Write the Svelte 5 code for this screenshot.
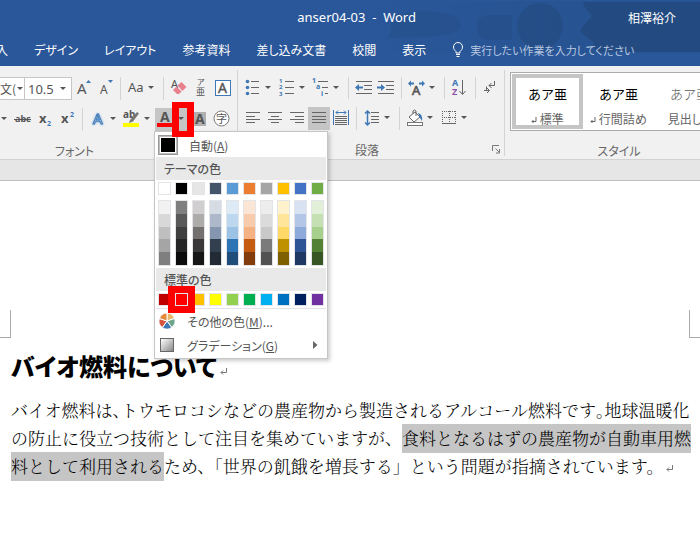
<script lang="ts">
  const tabs = ["挿入", "デザイン", "レイアウト", "参考資料", "差し込み文書", "校閲", "表示"];

  const themeColors = [
    { base: "#ffffff", tints: ["#f2f2f2", "#d8d8d8", "#bfbfbf", "#a5a5a5", "#7f7f7f"] },
    { base: "#000000", tints: ["#7f7f7f", "#595959", "#3f3f3f", "#262626", "#0c0c0c"] },
    { base: "#e7e6e6", tints: ["#d0cece", "#aeabab", "#757070", "#3a3838", "#171616"] },
    { base: "#44546a", tints: ["#d6dce4", "#adb9ca", "#8496b0", "#323f4f", "#222a35"] },
    { base: "#5b9bd5", tints: ["#deebf6", "#bdd7ee", "#9cc3e5", "#2e75b5", "#1e4e79"] },
    { base: "#ed7d31", tints: ["#fbe5d5", "#f7cbac", "#f4b183", "#c55a11", "#833c0b"] },
    { base: "#a5a5a5", tints: ["#ededed", "#dbdbdb", "#c9c9c9", "#7b7b7b", "#525252"] },
    { base: "#ffc000", tints: ["#fff2cc", "#fee599", "#ffd965", "#bf9000", "#7f6000"] },
    { base: "#4472c4", tints: ["#d9e2f3", "#b4c6e7", "#8eaadb", "#2f5496", "#1f3864"] },
    { base: "#70ad47", tints: ["#e2efd9", "#c5e0b3", "#a8d08d", "#538135", "#375623"] },
  ];

  const standardColors = [
    "#c00000", "#ff0000", "#ffc000", "#ffff00", "#92d050",
    "#00b050", "#00b0f0", "#0070c0", "#002060", "#7030a0",
  ];

  const styles = [
    { name: "標準", mark: true, heading: false },
    { name: "行間詰め", mark: true, heading: false },
    { name: "見出し 1", mark: false, heading: true },
  ];

  let fontColor = $state("#ff0000");
  let fontSize = $state("10.5");
  let menuOpen = $state(true);
  let align = $state("justify");
  let currentStyle = $state("標準");

  function pick(color: string) {
    fontColor = color;
  }
</script>

{#snippet caret()}
  <svg class="caret" viewBox="0 0 12 22" aria-hidden="true"><path d="M1 9h6l-3 3z" fill="#555" /></svg>
{/snippet}

{#snippet pilcrow()}
  <svg class="pilcrow" width="8" height="8" viewBox="0 0 8 8" fill="none" stroke="#777" aria-hidden="true"><path d="M6.500 0v4.500H1M3 2.500l-2 2 2 2" /></svg>
{/snippet}

<div class="word">
  <header class="top">
    <svg class="pattern" viewBox="0 0 350 54" aria-hidden="true">
      <defs>
        <linearGradient id="shade">
          <stop offset="0" stop-color="#26528f" stop-opacity="0" />
          <stop offset=".6" stop-color="#26528f" stop-opacity=".7" />
        </linearGradient>
      </defs>
      <rect y="1" width="350" height="52" fill="url(#shade)" />
      <g fill="#234b82">
        <path d="M233 2h117v50H246l-3-10-9-7q-6-4-1-9l9-10-8-10z" />
        <circle cx="190" cy="26" r="23" opacity=".7" />
        <path d="M127 27q0-12 13-12h22v25h-22q-13 0-13-13z" opacity=".5" />
        <path d="M38 38q4-8 3-14c0-6 10-13 30-13 30 0 40 8 40 14 0 8-18 12-40 12z" opacity=".35" />
      </g>
    </svg>
    <div class="title">
      <span class="title__doc">anser04-03&nbsp; -&nbsp; Word</span>
      <span class="title__user">相澤裕介</span>
    </div>
    <nav class="tabs">
      {#each tabs as tab (tab)}
        <button class="tab">{tab}</button>
      {/each}
      <button class="tell">
        <svg width="12" height="16" viewBox="0 0 12 16" fill="none" stroke="#fff" aria-hidden="true">
          <path d="M4 11V9.500C2.500 8 1.500 7 1.500 5a4.500 4.500 0 0 1 9 0c0 2-1 3-2.500 4.500V11z" />
          <path d="M4 12.500h4M4.500 14.500h3" />
        </svg>
        実行したい作業を入力してください
      </button>
    </nav>
  </header>

  <div class="ribbon">
    <section class="group group--font">
      <div class="row">
        <button class="combo combo--font" aria-label="フォント名"><span>文(</span>{@render caret()}</button>
        <label class="combo combo--size">
          <input aria-label="フォント サイズ" bind:value={fontSize} />
          {@render caret()}
        </label>
        <button class="tool" aria-label="フォント サイズの拡大">
          <svg viewBox="0 0 22 22"><text x="5" y="17" font-size="15">A</text><path d="M14 6h5l-2.500-3z" fill="#3f78b5" /></svg>
        </button>
        <button class="tool" aria-label="フォント サイズの縮小">
          <svg viewBox="0 0 22 22"><text x="6" y="17" font-size="12">A</text><path d="M14 3h5l-2.500 3z" fill="#3f78b5" /></svg>
        </button>
        <i class="sep"></i>
        <button class="tool tool--split" aria-label="文字種の変換">
          <svg viewBox="0 0 22 22"><text x="3" y="15" font-size="13">Aa</text></svg>
          {@render caret()}
        </button>
        <i class="sep"></i>
        <button class="tool" aria-label="書式のクリア">
          <svg viewBox="0 0 22 22">
            <text x="3" y="11" font-size="11">A</text>
            <path d="M5 13l3.500-3.500 5 5L11 17H9z" fill="#e8808e" />
            <path d="M9.500 8.500l4-3.500 5 5-4 4z" fill="#e8808e" />
          </svg>
        </button>
        <button class="tool" aria-label="ルビ">
          <svg viewBox="0 0 22 22">
            <text x="7" y="8" font-size="8">ア</text>
            <text x="6" y="18" font-size="9">亜</text>
          </svg>
        </button>
        <button class="tool" aria-label="囲み線">
          <svg viewBox="0 0 22 22">
            <rect x="3.500" y="3.500" width="15" height="15" fill="#fff" stroke="#3f78b5" />
            <text x="6" y="16" font-size="14" stroke="#555" stroke-width=".4">A</text>
          </svg>
        </button>
      </div>

      <div class="row">
        <button class="drop" aria-label="下線の種類">{@render caret()}</button>
        <button class="tool" aria-label="取り消し線">
          <svg viewBox="0 0 22 22"><text x="3" y="14" font-size="9" font-weight="bold">abc</text><path d="M2 11.500h17" stroke="#555" /></svg>
        </button>
        <button class="tool" aria-label="下付き">
          <svg viewBox="0 0 22 22">
            <text x="5" y="15" font-size="13" font-weight="bold">x</text>
            <text x="13" y="18" font-size="7" font-weight="bold" class="blue">2</text>
          </svg>
        </button>
        <button class="tool" aria-label="上付き">
          <svg viewBox="0 0 22 22">
            <text x="5" y="15" font-size="13" font-weight="bold">x</text>
            <text x="14" y="9" font-size="7" font-weight="bold" class="blue">2</text>
          </svg>
        </button>
        <i class="sep"></i>
        <button class="tool tool--split" aria-label="文字の効果と体裁">
          <svg viewBox="0 0 22 22">
            <text x="6" y="16" font-size="15" class="outline">A</text>
          </svg>
          {@render caret()}
        </button>
        <button class="tool tool--split" aria-label="蛍光ペンの色">
          <svg viewBox="0 0 22 22">
            <text x="2" y="10" font-size="10" font-weight="bold">ab</text>
            <path d="M9 12l7-8 2 1.500-6 8-4 1.500z" fill="#777" />
            <rect x="2" y="15" width="16" height="4" fill="#ff0" />
          </svg>
          {@render caret()}
        </button>
        <div class="anchor">
          <button
            class="tool tool--split tool--on"
            aria-label="フォントの色"
            aria-expanded={menuOpen}
            onclick={() => (menuOpen = !menuOpen)}
          >
            <svg viewBox="0 0 22 22">
              <text x="5" y="14" font-size="14" font-weight="bold">A</text>
              <rect x="2" y="15" width="16" height="4" fill={fontColor} />
            </svg>
            {@render caret()}
          </button>
          <span class="mark mark--caret"></span>

          {#if menuOpen}
            <div class="menu">
              <button class="auto" onclick={() => pick("#000000")}>
                <span class="auto__chip"></span>
                <span>自動(<u>A</u>)</span>
              </button>
              <h3 class="menu__head">テーマの色</h3>
              <div class="swatches">
                {#each themeColors as color (color.base)}
                  <button class="swatch" aria-label={color.base} style:background={color.base} onclick={() => pick(color.base)}></button>
                {/each}
              </div>
              <div class="swatches swatches--tints">
                {#each themeColors as color (color.base)}
                  <div class="tints">
                    {#each color.tints as tint (tint)}
                      <button class="tint" aria-label={tint} style:background={tint} onclick={() => pick(tint)}></button>
                    {/each}
                  </div>
                {/each}
              </div>
              <h3 class="menu__head">標準の色</h3>
              <div class="swatches">
                {#each standardColors as color (color)}
                  <div class="anchor">
                    <button class="swatch" aria-label={color} style:background={color} onclick={() => pick(color)}></button>
                    {#if color === "#ff0000"}<span class="mark mark--swatch"></span>{/if}
                  </div>
                {/each}
              </div>
              <div class="menu__more">
                <button class="item">
                  <svg width="16" height="16" viewBox="0 0 16 16" stroke="#fff" aria-hidden="true">
                    <path d="M8 8V0a8 8 0 0 1 7.600 5.500z" fill="#e8b96b" />
                    <path d="M8 8l7.600-2.500a8 8 0 0 1-2.900 9z" fill="#6fa58c" />
                    <path d="M8 8l4.700 6.500a8 8 0 0 1-9.400 0z" fill="#3c78b4" />
                    <path d="M8 8l-4.700 6.500a8 8 0 0 1-2.900-9z" fill="#d5553c" />
                    <path d="M8 8L.4 5.500A8 8 0 0 1 8 0z" fill="#e58b3c" />
                  </svg>
                  <span>その他の色(<u>M</u>)...</span>
                </button>
                <button class="item">
                  <span class="item__gradient"></span>
                  <span>グラデーション(<u>G</u>)</span>
                  <svg class="item__arrow" width="5" height="8" viewBox="0 0 5 8" aria-hidden="true"><path d="M0 0l4.500 4L0 8z" fill="#666" /></svg>
                </button>
              </div>
            </div>
          {/if}
        </div>
        <button class="tool" aria-label="文字の網かけ">
          <svg viewBox="0 0 22 22">
            <rect x="4" y="4" width="13" height="14" fill="#b0b0b0" />
            <text x="6" y="16" font-size="14" font-weight="bold">A</text>
          </svg>
        </button>
        <button class="tool" aria-label="囲い文字">
          <svg viewBox="0 0 22 22">
            <circle cx="10.500" cy="10.500" r="7.500" fill="#fff" stroke="#777" />
            <text x="5" y="15" font-size="11">字</text>
          </svg>
        </button>
      </div>
      <div class="caption caption--font">フォント</div>
    </section>

    <section class="group group--para">
      <div class="row">
        <button class="tool tool--split" aria-label="箇条書き">
          <svg viewBox="0 0 22 22">
            <g class="dot"><circle cx="5.500" cy="4.500" r="1.800" /><circle cx="5.500" cy="10.500" r="1.800" /><circle cx="5.500" cy="16.500" r="1.800" /></g>
            <path class="line" d="M9 4.500h8M9 10.500h8M9 16.500h8" />
          </svg>
          {@render caret()}
        </button>
        <button class="tool tool--split" aria-label="段落番号">
          <svg viewBox="0 0 22 22">
            <g class="blue" font-size="6" font-weight="bold"><text x="3" y="6">1</text><text x="3" y="12">2</text><text x="3" y="19">3</text></g>
            <path class="line" d="M9 4.500h9M9 10.500h9M9 16.500h9" />
          </svg>
          {@render caret()}
        </button>
        <button class="tool tool--split" aria-label="アウトライン">
          <svg viewBox="0 0 22 22">
            <g class="blue" font-size="7" font-weight="bold"><text x="2" y="6">1</text><text x="6" y="12">a</text><text x="11" y="19">i</text></g>
            <path class="line" d="M8 4.500h10M12 10.500h6M15 16.500h3" />
          </svg>
          {@render caret()}
        </button>
        <i class="sep"></i>
        <button class="tool" aria-label="インデントを減らす">
          <svg viewBox="0 0 22 22"><path class="line" d="M3 4.500h16M11 8.500h8M11 12.500h8M3 16.500h16" /><path d="M2 10.500l4-3.500v2.500h4v2H6V14z" fill="#3f78b5" /></svg>
        </button>
        <button class="tool" aria-label="インデントを増やす">
          <svg viewBox="0 0 22 22"><path class="line" d="M3 4.500h16M11 8.500h8M11 12.500h8M3 16.500h16" /><path d="M10 10.500L6 7v2.500H2v2h4V14z" fill="#3f78b5" /></svg>
        </button>
        <i class="sep"></i>
        <button class="tool tool--split" aria-label="拡張書式">
          <svg viewBox="0 0 22 22">
            <text x="6" y="18" font-size="13" stroke="#555" stroke-width=".6">A</text>
            <path d="M2 6.500L5 3.500v2h3v2H5v2zM19 6.500l-3-3v2h-3v2h3v2z" fill="#3f78b5" />
          </svg>
          {@render caret()}
        </button>
        <i class="sep"></i>
        <button class="tool" aria-label="並べ替え">
          <svg viewBox="0 0 22 22">
            <text x="3" y="9" font-size="9" font-weight="bold" class="blue">A</text>
            <text x="3" y="18" font-size="9" font-weight="bold" class="purple">Z</text>
            <path class="line" d="M13.500 3v14M10.500 14l3 3.500 3-3.500" />
          </svg>
        </button>
        <i class="sep"></i>
        <button class="tool" aria-label="編集記号の表示">
          <svg viewBox="0 0 22 22"><path d="M14.500 4v4.500H9M11.500 6L9 8.500l2.500 2.500M6.500 9.500v4M4 13.500h5M7 11l2.500 2.500L7 16" class="line" /></svg>
        </button>
      </div>

      <div class="row">
        <button class="tool" class:tool--on={align === "left"} aria-label="左揃え" onclick={() => (align = "left")}>
          <svg viewBox="0 0 22 22"><path class="line" d="M4 5.500h14M4 9.500h9M4 12.500h14M4 15.500h9" /></svg>
        </button>
        <button class="tool" class:tool--on={align === "center"} aria-label="中央揃え" onclick={() => (align = "center")}>
          <svg viewBox="0 0 22 22"><path class="line" d="M4 5.500h14M7 9.500h8M4 12.500h14M7 15.500h8" /></svg>
        </button>
        <button class="tool" class:tool--on={align === "right"} aria-label="右揃え" onclick={() => (align = "right")}>
          <svg viewBox="0 0 22 22"><path class="line" d="M4 5.500h14M9 9.500h9M4 12.500h14M9 15.500h9" /></svg>
        </button>
        <button class="tool" class:tool--on={align === "justify"} aria-label="両端揃え" onclick={() => (align = "justify")}>
          <svg viewBox="0 0 22 22"><path class="line" d="M4 5.500h14M4 9.500h14M4 12.500h14M4 15.500h14" /></svg>
        </button>
        <button class="tool" class:tool--on={align === "spread"} aria-label="均等割り付け" onclick={() => (align = "spread")}>
          <svg viewBox="0 0 22 22">
            <path class="line" d="M5 9.500h12M5 11.500h12M5 13.500h12M5 15.500h12M5 17.500h12" />
            <path d="M3.500 3v15M18.500 3v15M6 5.500h10M8 3.500L6 5.500l2 2M14 3.500l2 2-2 2" fill="none" stroke="#3f78b5" />
          </svg>
        </button>
        <i class="sep"></i>
        <button class="tool tool--split" aria-label="行と段落の間隔">
          <svg viewBox="0 0 22 22">
            <path class="line" d="M10 5.500h8M10 9.500h8M10 12.500h8M10 15.500h8" />
            <path d="M6.500 4v14M4 6.500L6.500 4 9 6.500M4 15.500L6.500 18 9 15.500" fill="none" stroke="#3f78b5" stroke-width="1.500" />
          </svg>
          {@render caret()}
        </button>
        <i class="sep"></i>
        <button class="tool tool--split" aria-label="塗りつぶし">
          <svg viewBox="0 0 22 22">
            <path d="M5 10l6-5 5 5-6 5z" fill="#fff" stroke="#666" />
            <path d="M9 7V4q1.500-2 3 0v5" fill="none" stroke="#666" />
            <path d="M14 6q5 1 4 8l-2-3z" fill="#3f78b5" />
            <rect x="3.500" y="15.500" width="15" height="3" fill="#fff" stroke="#777" />
          </svg>
          {@render caret()}
        </button>
        <button class="tool tool--split" aria-label="罫線">
          <svg viewBox="0 0 22 22">
            <path d="M4 4.500h14M4 10.500h14M4.500 4v13M11.500 4v13M17.500 4v13" fill="none" stroke="#666" stroke-dasharray="1 1" />
            <path class="line" d="M4 16.500h14" />
          </svg>
          {@render caret()}
        </button>
      </div>
      <div class="caption">
        <span>段落</span>
        <button class="launcher" aria-label="段落の設定">
          <svg width="9" height="9" viewBox="0 0 9 9" fill="none" stroke="#777"><path d="M.5 6V.5H7M3.500 3.500l4 4M7.500 4v4H4" /></svg>
        </button>
      </div>
    </section>

    <section class="group group--styles">
      <div class="gallery">
        {#each styles as style (style.name)}
          <button class="style" class:style--on={style.name === currentStyle} onclick={() => (currentStyle = style.name)}>
            <span class="style__sample" class:style__sample--heading={style.heading}>あア亜</span>
            <span class="style__name">
              {#if style.mark}<svg width="6" height="7" viewBox="0 0 6 7" fill="none" stroke="#666"><path d="M5 0v4.500H1M2.500 3L1 4.500 2.500 6" /></svg>{/if}
              {style.name}
            </span>
          </button>
        {/each}
      </div>
      <div class="caption caption--styles">スタイル</div>
    </section>
  </div>

  <main class="page">
    <div class="corners"><i class="corner corner--left"></i><i class="corner corner--right"></i></div>
    <h1>バイオ燃料について{@render pilcrow()}</h1>
    <p>
      バイオ燃料は<span class="half">、</span>トウモロコシなどの農産物から製造されるアルコール燃料です<span class="half">。</span>地球温暖化<br />の防止に役立つ技術として注目を集めていますが、<mark>食料となるはずの農産物が自動車用燃<br />料として利用される</mark>ため、「世界の飢餓を増長する」という問題が指摘されています。{@render pilcrow()}
    </p>
  </main>
</div>

<style>
  :global(body) {
    margin: 0;
    background: #fff;
  }

  .word {
    font-family: "Noto Sans CJK JP", sans-serif;
    font-size: 12px;
    font-feature-settings: "palt";
    color: #555;
    overflow: hidden;
  }

  button {
    margin: 0;
    padding: 0;
    border: 0;
    background: none;
    font: inherit;
    font-feature-settings: inherit;
    color: inherit;
    white-space: nowrap;
    cursor: pointer;
  }

  .top {
    position: relative;
    height: 66px;
    background: #2a579a;
    color: #fff;
  }

  .pattern {
    position: absolute;
    top: 0;
    right: 0;
    width: 350px;
    height: 54px;
  }

  .title {
    position: relative;
    display: flex;
    height: 34px;
    align-items: center;
    justify-content: flex-end;
    gap: 212px;
    padding-right: 24px;
    white-space: nowrap;
  }

  .title__doc {
    font-family: "Noto Sans", sans-serif;
    font-size: 13px;
  }

  .tabs {
    position: relative;
    display: flex;
    height: 32px;
    align-items: center;
    gap: 26px;
    margin-left: -16px;
    padding-bottom: 1px;
    box-sizing: border-box;
  }

  .tell {
    display: flex;
    align-items: center;
    gap: 6px;
    font-size: 11px;
    color: #b8c8e0;
  }

  .ribbon {
    display: flex;
    height: 93px;
    background: #f1f1f1;
    border-bottom: 1px solid #d2d2d2;
  }

  .group {
    display: flex;
    flex-direction: column;
    gap: 8px;
    flex: none;
    box-sizing: border-box;
  }

  .group--font,
  .group--para {
    border-right: 1px solid #d4d4d4;
    margin: 4px 0 3px;
    padding-top: 7px;
  }

  .group--font {
    width: 238px;
  }

  .group--para {
    width: 267px;
    padding-left: 4px;
  }

  .group--styles {
    flex: 1;
    min-width: 0;
    padding: 6px 0 0 5px;
    overflow: hidden;
  }

  .row {
    display: flex;
    height: 23px;
    align-items: stretch;
  }

  .combo {
    display: flex;
    box-sizing: border-box;
    align-items: center;
    justify-content: space-between;
    border: 1px solid #c6c6c6;
    background: #fff;
  }

  .combo--font {
    width: 25px;
    border-left: 0;
    overflow: hidden;
  }

  .combo--size {
    width: 47px;
    border-left: 0;
  }

  .combo input {
    width: 32px;
    min-width: 0;
    border: 0;
    padding: 0 0 0 3px;
    outline: none;
    font: 13px "Noto Sans", sans-serif;
    color: #555;
    background: none;
  }

  .caret {
    flex: none;
    width: 12px;
    height: 22px;
  }

  .tool {
    display: flex;
    align-items: flex-start;
    width: 22px;
  }

  .tool--split {
    width: 34px;
  }

  .tool svg:first-child {
    flex: none;
    width: 22px;
    height: 22px;
  }

  .tool--on {
    height: 23px;
    background: #c5c5c5;
  }

  .tool text {
    font-family: "Noto Sans", "Noto Sans CJK JP", sans-serif;
    fill: #555;
  }

  .tool .blue,
  .tool .blue text {
    fill: #3f78b5;
  }

  .tool .purple {
    fill: #8b4fa8;
  }

  .tool .outline {
    fill: #fff;
    stroke: #3f78b5;
    stroke-width: 1;
    filter: drop-shadow(0 0 1px #6ba3dc);
  }

  .dot {
    fill: #3f78b5;
  }

  .line {
    fill: none;
    stroke: #666;
  }

  .drop {
    display: flex;
    width: 12px;
  }

  .sep {
    flex: none;
    width: 1px;
    margin: 0 4px;
    background: #d4d4d4;
  }

  .caption {
    display: flex;
    align-items: center;
    justify-content: center;
    height: 18px;
    margin-top: 3px;
    color: #666;
  }

  .caption span {
    flex: 1;
    text-align: center;
  }

  .caption--font {
    padding-right: 88px;
  }

  .caption--styles {
    padding-left: 28px;
  }

  .launcher {
    display: flex;
    width: 12px;
  }

  .gallery {
    display: flex;
    height: 61px;
    box-sizing: border-box;
    border: 1px solid #ababab;
    border-right: 0;
    background: #fff;
    padding: 1px;
    overflow: hidden;
  }

  .style {
    display: flex;
    flex: none;
    flex-direction: column;
    align-items: center;
    gap: 8px;
    box-sizing: border-box;
    width: 71px;
    padding-top: 7px;
    border: 4px solid transparent;
    line-height: 17px;
  }

  .style--on {
    border-color: #c5c5c5;
  }

  .style__sample {
    font-size: 13px;
    font-feature-settings: normal;
    color: #000;
  }

  .style__sample--heading {
    font-weight: 300;
    color: #555;
  }

  .style__name {
    color: #666;
  }

  .anchor {
    position: relative;
  }

  .mark {
    position: absolute;
    z-index: 3;
    box-sizing: border-box;
    border: 7px solid #f00;
    pointer-events: none;
  }

  .mark--caret {
    left: 17px;
    top: -6px;
    width: 22px;
    height: 35px;
    border-width: 6px 7px;
  }

  .mark--swatch {
    left: -7px;
    top: -7px;
    width: 27px;
    height: 27px;
  }

  .menu {
    position: absolute;
    z-index: 2;
    top: 23px;
    left: -1px;
    box-sizing: border-box;
    width: 174px;
    padding: 1px;
    border: 1px solid #c6c6c6;
    background: #fff;
    box-shadow: 2px 2px 4px rgba(0, 0, 0, 0.2);
  }

  .auto {
    display: flex;
    align-items: center;
    gap: 11px;
    width: 100%;
    height: 24px;
    padding-left: 2px;
  }

  .auto__chip {
    box-sizing: border-box;
    width: 20px;
    height: 20px;
    border: 1px solid #999;
    background: #000;
    box-shadow: inset 0 0 0 1px #bbb, inset 0 0 0 2px #fff;
  }

  .menu__head {
    margin: 0;
    padding-left: 8px;
    background: #e9e9e9;
    font-size: 12px;
    font-weight: 500;
    line-height: 23px;
  }

  .swatches {
    display: flex;
    justify-content: space-between;
    padding: 2px;
  }

  .swatches--tints {
    padding-top: 3px;
  }

  .swatch {
    display: block;
    box-sizing: border-box;
    width: 13px;
    height: 13px;
    border: 1px solid #e2e4e7;
  }

  .tints {
    display: flex;
    flex-direction: column;
    box-sizing: border-box;
    width: 13px;
    height: 66px;
    border: 1px solid #e2e4e7;
  }

  .tint {
    flex: 1;
  }

  .menu__more {
    border-top: 1px solid #e2e4e7;
  }

  .item {
    display: flex;
    align-items: center;
    gap: 12px;
    width: 100%;
    height: 24px;
    padding: 0 8px 0 3px;
  }

  .item__gradient {
    box-sizing: border-box;
    width: 14px;
    height: 14px;
    margin: 0 1px;
    border: 1px solid #666;
    background: linear-gradient(135deg, #fff, #888);
  }

  .item__arrow {
    margin-left: auto;
  }

  .page {
    padding: 0 9px 60px 11px;
    color: #000;
  }

  .page::before {
    content: "";
    display: block;
    height: 20px;
    margin: 0 -9px 129px -11px;
    border-bottom: 1px solid #bfbfbf;
    background: #e6e6e6;
  }

  .corners {
    display: flex;
    justify-content: space-between;
    margin: 0 -9px 0 -11px;
  }

  .corner {
    width: 10px;
    height: 27px;
    border-bottom: 1px solid #aaa;
  }

  .corner--left {
    border-right: 1px solid #aaa;
  }

  .corner--right {
    border-left: 1px solid #aaa;
  }

  h1 {
    margin: 10px 0 12px;
    font-size: 24px;
    font-weight: 900;
    line-height: 36px;
  }

  p {
    margin: 0;
    font-family: "Noto Serif CJK JP", "Noto Sans CJK JP", serif;
    font-size: 17px;
    font-weight: 300;
    font-feature-settings: normal;
    line-height: 28px;
    white-space: nowrap;
  }

  .half {
    font-feature-settings: "halt";
  }

  mark {
    padding: 1px 0 3px;
    background: #c5c5c5;
    color: inherit;
  }

  .pilcrow {
    margin-left: 3px;
  }
</style>
